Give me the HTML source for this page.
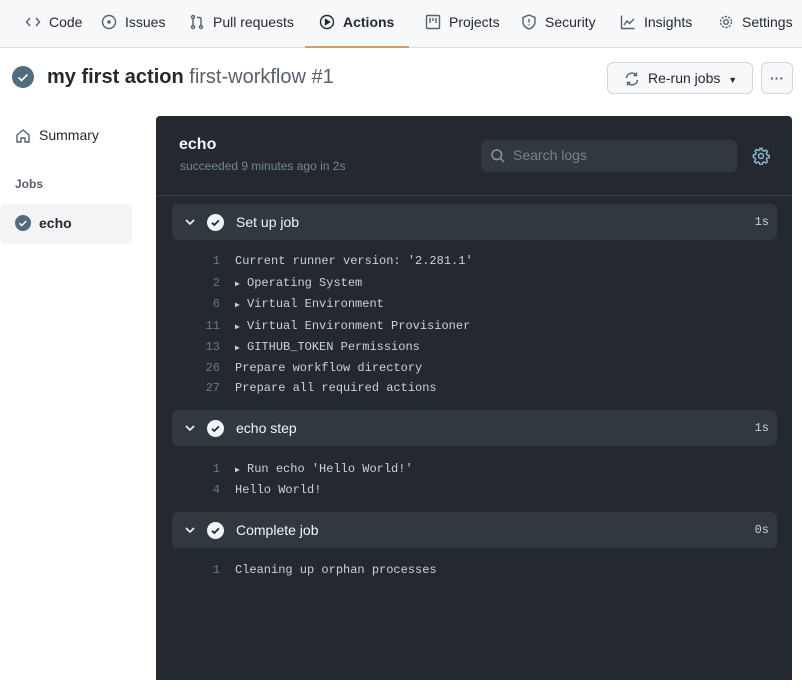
<!DOCTYPE html>
<html><head><style>
*{box-sizing:border-box;margin:0;padding:0}
body{width:802px;height:690px;background:#fff;font-family:"Liberation Sans",sans-serif;color:#24292f;position:relative;overflow:hidden}
.nav{position:absolute;left:0;top:0;width:802px;height:48px;background:#f6f8fa;border-bottom:1px solid #d8dee4}
.nav .it{position:absolute;top:14px;font-size:14px;color:#24292f;display:flex;align-items:center;gap:8px}
.nav svg{width:16px;height:16px;fill:none;stroke:#57606a;stroke-width:1.4}
.ul{position:absolute;left:305px;top:46px;width:104px;height:2px;background:#d29f6c}
.ab{position:absolute}
.step{position:absolute;left:172px;width:605px;height:36px;background:#32383f;border-radius:6px}
.step .t{position:absolute;left:64px;top:10px;font-size:14px;color:#f0f6fc}
.step .d{position:absolute;right:8px;top:11px;font-family:"Liberation Mono",monospace;font-size:12px;color:#c9d1d9}
.step .ch{position:absolute;left:12px;top:12px}
.step .ck{position:absolute;left:35px;top:10px;width:17px;height:17px;border-radius:50%;background:#f0f6fc}
.ln{position:absolute;left:200px;font-family:"Liberation Mono",monospace;font-size:12px;color:#c9d1d9;white-space:pre}
.ln b{display:inline-block;width:20px;text-align:right;color:#5f7d8e;font-weight:normal;margin-right:15px}
</style></head><body>
<div class="nav">
<div class="it" style="left:25px"><svg viewBox="0 0 16 16"><path d="M5 4L1.5 8L5 12M11 4l3.5 4L11 12"/></svg>Code</div>
<div class="it" style="left:101px"><svg viewBox="0 0 16 16"><circle cx="8" cy="8" r="6.5"/><circle cx="8" cy="8" r="1" fill="#57606a"/></svg>Issues</div>
<div class="it" style="left:189px"><svg viewBox="0 0 16 16"><circle cx="4" cy="3" r="1.5"/><circle cx="4" cy="13" r="1.5"/><circle cx="12" cy="13" r="1.5"/><path d="M4 4.5v7M12 11.5V5.5Q12 3.5 10 3.5H8"/></svg>Pull requests</div>
<div class="it" style="left:319px;font-weight:bold"><svg viewBox="0 0 16 16" style="stroke:#24292f"><circle cx="8" cy="8" r="6.5"/><path d="M6.5 5.5v5l4-2.5z" fill="#24292f"/></svg>Actions</div>
<div class="it" style="left:425px"><svg viewBox="0 0 16 16"><rect x="1.5" y="1.5" width="13" height="13" rx="1"/><path d="M5 4v5M8 4v3M11 4v5"/></svg>Projects</div>
<div class="it" style="left:521px"><svg viewBox="0 0 16 16"><path d="M8 1l6 2.5v4Q14 13 8 15Q2 13 2 7.5v-4z"/><path d="M8 5v3.5M8 10.5v1"/></svg>Security</div>
<div class="it" style="left:620px"><svg viewBox="0 0 16 16"><path d="M1.5 1.5v13h13M4 11l3-4 2.5 2.5L14 5"/></svg>Insights</div>
<div class="it" style="left:718px"><svg viewBox="0 0 16 16"><circle cx="8" cy="8" r="2.3"/><circle cx="8" cy="8" r="5.5" stroke-dasharray="2.2 1.3"/></svg>Settings</div>
</div>
<div class="ul"></div>
<div class="ab" style="left:12px;top:66px;width:22px;height:22px;border-radius:50%;background:#4f6d7f"><svg viewBox="0 0 22 22" width="22" height="22"><path d="M6.5 11.5l3 3 6-6" stroke="#fff" stroke-width="1.6" fill="none"/></svg></div>
<div class="ab" style="left:47px;top:66px;font-size:20px;white-space:nowrap"><b>my first action</b> <span style="color:#57606a">first-workflow #1</span></div>
<div class="ab" style="left:607px;top:62px;width:146px;height:32px;border:1px solid #d0d7de;border-radius:6px;background:#f6f8fa;font-size:14px;padding:7px 0 0 40px">Re-run jobs <span style="font-size:9px;margin-left:4px">▼</span>
<svg style="position:absolute;left:16px;top:8px" width="16" height="16" viewBox="0 0 16 16" fill="none" stroke="#57606a" stroke-width="1.4"><path d="M2.5 7A5.5 5.5 0 0 1 12.5 4.5M13.5 9A5.5 5.5 0 0 1 3.5 11.5M12.5 1.5v3h-3M3.5 14.5v-3h3"/></svg></div>
<div class="ab" style="left:761px;top:62px;width:32px;height:32px;border:1px solid #d0d7de;border-radius:6px;background:#f6f8fa;text-align:center;font-size:14px;line-height:30px;color:#57606a;font-weight:bold">···</div>
<svg class="ab" style="left:15px;top:128px" width="16" height="16" viewBox="0 0 16 16" fill="none" stroke="#57606a" stroke-width="1.4"><path d="M2 7L8 2l6 5v7H10V10H6v4H2z"/></svg>
<div class="ab" style="left:39px;top:127px;font-size:14px">Summary</div>
<div class="ab" style="left:15px;top:177px;font-size:12px;font-weight:bold;color:#57606a">Jobs</div>
<div class="ab" style="left:0;top:204px;width:132px;height:40px;background:#f3f4f6;border-radius:6px"></div>
<div class="ab" style="left:15px;top:215px;width:16px;height:16px;border-radius:50%;background:#4f6d7f"><svg viewBox="0 0 16 16" width="16" height="16"><path d="M4.5 8.3l2.3 2.2 4.5-4.5" stroke="#fff" stroke-width="1.5" fill="none"/></svg></div>
<div class="ab" style="left:39px;top:215px;font-size:14px;font-weight:bold">echo</div>

<div class="ab" style="left:156px;top:116px;width:636px;height:564px;background:#24292f;border-radius:4px 4px 0 0"></div>
<div class="ab" style="left:179px;top:136px;font-size:16px;font-weight:bold;color:#f0f6fc">echo</div>
<div class="ab" style="left:180px;top:159px;font-size:12px;color:#6e8a9a">succeeded 9 minutes ago in 2s</div>
<div class="ab" style="left:481px;top:140px;width:256px;height:32px;background:#32383f;border-radius:6px;font-size:14px;color:#768390;padding:7px 0 0 32px">Search logs
<svg style="position:absolute;left:9px;top:8px" width="16" height="16" viewBox="0 0 16 16" fill="none" stroke="#8b949e" stroke-width="1.5"><circle cx="6.8" cy="6.8" r="4.8"/><path d="M10.3 10.3L14 14"/></svg></div>
<svg class="ab" style="left:752px;top:147px" width="18" height="18" viewBox="0 0 16 16" fill="none" stroke="#8db8d0" stroke-width="1.3"><circle cx="8" cy="8" r="2.2"/><path d="M7 1.2h2l.4 1.9 1.3.6 1.7-1 1.4 1.4-1 1.7.6 1.3 1.9.4v2l-1.9.4-.6 1.3 1 1.7-1.4 1.4-1.7-1-1.3.6-.4 1.9H7l-.4-1.9-1.3-.6-1.7 1-1.4-1.4 1-1.7-.6-1.3L1.2 9V7l1.9-.4.6-1.3-1-1.7 1.4-1.4 1.7 1 1.3-.6z"/></svg>
<div class="ab" style="left:156px;top:195px;width:636px;height:1px;background:#373e47"></div>

<div class="step" style="top:204px"><svg class="ch" width="12" height="12" viewBox="0 0 12 12" fill="none" stroke="#f0f6fc" stroke-width="1.6"><path d="M2 4l4 4 4-4"/></svg><div class="ck"><svg viewBox="0 0 17 17" width="17" height="17"><path d="M5 8.8l2.3 2.2 4.6-4.6" stroke="#24292f" stroke-width="1.8" fill="none"/></svg></div><div class="t">Set up job</div><div class="d">1s</div></div>
<div class="ln" style="top:254px"><b>1</b>Current runner version: '2.281.1'</div>
<div class="ln" style="top:276px"><b>2</b><span style="font-size:8px">▶</span> Operating System</div>
<div class="ln" style="top:297px"><b>6</b><span style="font-size:8px">▶</span> Virtual Environment</div>
<div class="ln" style="top:319px"><b>11</b><span style="font-size:8px">▶</span> Virtual Environment Provisioner</div>
<div class="ln" style="top:340px"><b>13</b><span style="font-size:8px">▶</span> GITHUB_TOKEN Permissions</div>
<div class="ln" style="top:361px"><b>26</b>Prepare workflow directory</div>
<div class="ln" style="top:381px"><b>27</b>Prepare all required actions</div>

<div class="step" style="top:410px"><svg class="ch" width="12" height="12" viewBox="0 0 12 12" fill="none" stroke="#f0f6fc" stroke-width="1.6"><path d="M2 4l4 4 4-4"/></svg><div class="ck"><svg viewBox="0 0 17 17" width="17" height="17"><path d="M5 8.8l2.3 2.2 4.6-4.6" stroke="#24292f" stroke-width="1.8" fill="none"/></svg></div><div class="t">echo step</div><div class="d">1s</div></div>
<div class="ln" style="top:462px"><b>1</b><span style="font-size:8px">▶</span> Run echo 'Hello World!'</div>
<div class="ln" style="top:483px"><b>4</b>Hello World!</div>

<div class="step" style="top:512px"><svg class="ch" width="12" height="12" viewBox="0 0 12 12" fill="none" stroke="#f0f6fc" stroke-width="1.6"><path d="M2 4l4 4 4-4"/></svg><div class="ck"><svg viewBox="0 0 17 17" width="17" height="17"><path d="M5 8.8l2.3 2.2 4.6-4.6" stroke="#24292f" stroke-width="1.8" fill="none"/></svg></div><div class="t">Complete job</div><div class="d">0s</div></div>
<div class="ln" style="top:563px"><b>1</b>Cleaning up orphan processes</div>
</body></html>
